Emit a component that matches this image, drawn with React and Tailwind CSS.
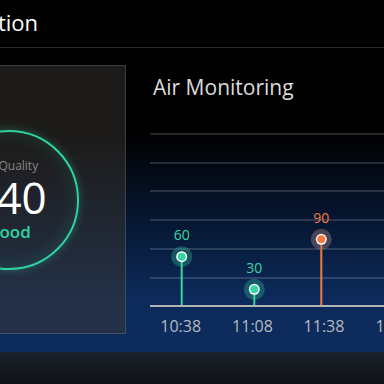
import React from "react";

const FONT = { fontFamily: "'Open Sans', 'DejaVu Sans', sans-serif" };

const GRID = [14, 43, 71, 100, 129, 158];

const POINTS = [
  { x: 31.7, y: 136.7, value: 60, color: "#36d6a2", halo: "rgba(54,214,162,0.3)" },
  { x: 104.3, y: 169.3, value: 30, color: "#36d6a2", halo: "rgba(54,214,162,0.3)" },
  { x: 171.3, y: 119.3, value: 90, color: "#f47a3e", halo: "rgba(150,120,120,0.45)" },
];

const TIMES = [
  { x: 30.7, label: "10:38" },
  { x: 102.5, label: "11:08" },
  { x: 174, label: "11:38" },
  { x: 246, label: "12:08" },
];

/* ================= CHART ================= */

const Chart = () => (
  <svg width="234" height="220" viewBox="0 0 234 220" className="block">
    {GRID.map((y) => (
      <line key={y} x1="0" x2="234" y1={y} y2={y} stroke="rgba(255,255,255,0.2)" strokeWidth="1.5" />
    ))}
    <line x1="0" x2="234" y1="186" y2="186" stroke="#b4b4b4" strokeWidth="2" />

    {POINTS.map((p) => (
      <g key={p.value}>
        <line x1={p.x} x2={p.x} y1={p.y} y2="185" stroke={p.color} strokeWidth="2" />
        <circle cx={p.x} cy={p.y} r="10.5" fill={p.halo} />
        <circle cx={p.x} cy={p.y} r="5.5" fill="#ffffff" />
        <circle cx={p.x} cy={p.y} r="4" fill={p.color} />
        <text
          x={p.x}
          y={p.y - 16.5}
          textAnchor="middle"
          fontSize="14"
          fill={p.color}
          style={FONT}
        >
          {p.value}
        </text>
      </g>
    ))}

    {TIMES.map((t) => (
      <text
        key={t.label}
        x={t.x}
        y="211.5"
        textAnchor="middle"
        fontSize="16"
        fill="#b6b9bf"
        style={FONT}
      >
        {t.label}
      </text>
    ))}
  </svg>
);

/* ================= UI ================= */

export default function App() {
  return (
    <div className="w-[384px] h-[384px] overflow-hidden bg-black flex flex-col" style={FONT}>
      {/* header */}
      <div className="h-[48px] shrink-0 border-b border-[#2b2b2b] flex items-center">
        <div className="w-[38px] flex justify-end whitespace-nowrap text-[22px] text-white leading-none pb-[3px]">
          Air Quality Station
        </div>
      </div>

      {/* main */}
      <div className="h-[304px] shrink-0 flex bg-[linear-gradient(180deg,#000_0%,#000_28%,#061630_56%,#0c2a5a_82%,#0d2c5d_100%)]">
        {/* air quality card */}
        <div className="-ml-[108px] mt-[17px] w-[234px] h-[269px] shrink-0 border border-white/15 bg-[#3a3631]/50 flex items-center justify-center">
          <div className="w-[140px] h-[140px] rounded-full border-2 border-[#2fd3a0] shadow-[0_0_10px_rgba(47,211,160,0.35),inset_0_0_18px_rgba(47,211,160,0.18)] flex flex-col items-center justify-center">
            <div className="text-[12px] leading-none text-[#858585] whitespace-nowrap">Air Quality</div>
            <div className="text-[44px] leading-none font-medium text-white mt-[3px]">140</div>
            <div className="text-[17px] leading-none font-semibold text-[#2fd3a0] mt-[4px]">Good</div>
          </div>
        </div>

        {/* monitoring */}
        <div className="ml-[24px] w-[234px] shrink-0 flex flex-col">
          <div className="pl-[3px] pt-[25px] h-[72px] text-[21px] leading-[28px] text-[#dcdcdc] whitespace-nowrap">
            Air Monitoring
          </div>
          <Chart />
        </div>
      </div>

      {/* bottom bar */}
      <div className="flex-1 bg-[linear-gradient(180deg,#1b2029_0%,#0e1117_100%)]" />
    </div>
  );
}
